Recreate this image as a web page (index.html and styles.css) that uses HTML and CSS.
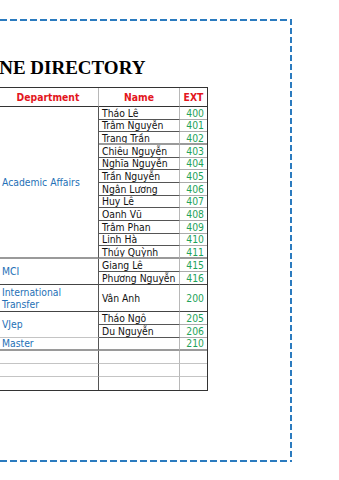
FILE: index.html
```html
<!DOCTYPE html>
<html lang="vi">
<head>
<meta charset="utf-8">
<title>Phone Directory</title>
<link rel="stylesheet" href="styles.css">
</head>
<body>
<div class="page">
  <h1 class="title">PHONE DIRECTORY</h1>
  <div class="dir">
    <div class="hd hd-dept">Department</div>
    <div class="hd hd-name">Name</div>
    <div class="hd hd-ext">EXT</div>

    <div class="dept span12 sep">Academic Affairs</div>
    <div class="name">Tháo Lê</div><div class="ext">400</div>
    <div class="name">Trâm Nguyễn</div><div class="ext">401</div>
    <div class="name sep">Trang Trần</div><div class="ext sep">402</div>
    <div class="name">Chiêu Nguyễn</div><div class="ext">403</div>
    <div class="name">Nghĩa Nguyễn</div><div class="ext">404</div>
    <div class="name">Trần Nguyễn</div><div class="ext">405</div>
    <div class="name">Ngân Lương</div><div class="ext">406</div>
    <div class="name">Huy Lê</div><div class="ext">407</div>
    <div class="name">Oanh Vũ</div><div class="ext">408</div>
    <div class="name">Trâm Phan</div><div class="ext">409</div>
    <div class="name">Linh Hà</div><div class="ext">410</div>
    <div class="name sep">Thúy Quỳnh</div><div class="ext sep">411</div>

    <div class="dept span2 dark">MCI</div>
    <div class="name">Giang Lê</div><div class="ext">415</div>
    <div class="name dark">Phương Nguyễn</div><div class="ext dark">416</div>

    <div class="dept dark">International Transfer</div>
    <div class="name dark">Vân Anh</div><div class="ext dark">200</div>

    <div class="dept span2 light">VJep</div>
    <div class="name">Tháo Ngô</div><div class="ext">205</div>
    <div class="name">Du Nguyễn</div><div class="ext">206</div>

    <div class="dept sep">Master</div>
    <div class="name sep"></div><div class="ext sep">210</div>

    <div class="dept light"></div><div class="name light"></div><div class="ext light"></div>
    <div class="dept light"></div><div class="name light"></div><div class="ext light"></div>
    <div class="dept last"></div><div class="name last"></div><div class="ext last"></div>
  </div>
</div>
</body>
</html>
```

FILE: styles.css
```css
html, body {
  margin: 0;
  padding: 0;
  background: #ffffff;
}

body {
  width: 339px;
  height: 480px;
  overflow: hidden;
}

.page {
  box-sizing: border-box;
  margin: 19px 0 0 -60px;
  width: 352px;
  height: 443px;
  padding: 39px 0 0 57px;
  background:
    repeating-linear-gradient(90deg, #2b7bbf 0 7px, transparent 7px 10px) left top / 100% 2px no-repeat,
    repeating-linear-gradient(90deg, #2b7bbf 0 7px, transparent 7px 10px) left bottom / 100% 2px no-repeat,
    repeating-linear-gradient(180deg, #2b7bbf 0 6px, transparent 6px 9px) right top / 2px 100% no-repeat,
    repeating-linear-gradient(180deg, #2b7bbf 0 6px, transparent 6px 9px) left top / 2px 100% no-repeat;
}

.title {
  margin: 0 0 9px -39px;
  font-family: "Liberation Serif", serif;
  font-weight: bold;
  font-size: 19px;
  line-height: 20px;
  color: #000;
  white-space: nowrap;
}

.dir {
  display: grid;
  grid-template-columns: 101px 81px 27px;
  grid-template-rows: 19px repeat(12, 12.67px) 13px 13px 27px 13px 13px 13px 13px 13px 13px;
  width: 209px;
  border: 1px solid #333;
  font-family: "DejaVu Sans Condensed", "DejaVu Sans", sans-serif;
  font-stretch: condensed;
  font-size: 10.3px;
  line-height: 12px;
}

.dir > div {
  box-sizing: border-box;
  display: flex;
  align-items: center;
  overflow: hidden;
  white-space: nowrap;
}

.hd {
  justify-content: center;
  font-weight: bold;
  color: #e3161d;
  border-bottom: 1px solid #333;
}

.hd-dept, .hd-name {
  border-right: 1px solid #b8b8b8;
}

.dept {
  padding-left: 4px;
  color: #2470b6;
  border-right: 1px solid #555;
  white-space: normal !important;
}

.span12 { grid-row: span 12; }
.span2 { grid-row: span 2; }

.name {
  padding-left: 3px;
  color: #111;
  border-right: 1px solid #b8b8b8;
  border-bottom: 1px solid #555;
}

.ext {
  justify-content: flex-end;
  padding-right: 3px;
  color: #1fa35a;
  border-bottom: 1px solid #aaa;
}

.dir > .sep { border-bottom: 2px solid #9a9a9a; }
.dir > .dark { border-bottom: 1px solid #444; }
.dir > .light { border-bottom: 1px solid #c4c4c4; }
.dir > .last { border-bottom: 0; }
```
